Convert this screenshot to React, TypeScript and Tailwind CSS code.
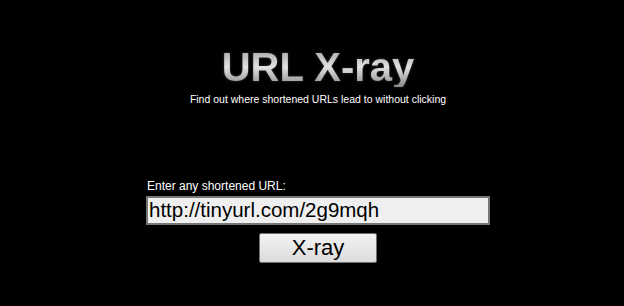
import { useState } from 'react';

export default function App() {
  const [url, setUrl] = useState('http://tinyurl.com/2g9mqh');

  return (
    <div className="w-[624px] h-[306px] bg-black overflow-hidden font-['Liberation_Sans',Arial,sans-serif]">
      <div className="flex flex-col items-center pl-[12px]">
        {/* Title */}
        <h1 className="mt-[47px] text-[40px] leading-none font-bold bg-linear-to-b from-[#a0a0a0] via-[#e2e2e2] to-[#8a8a8a] bg-clip-text text-transparent [filter:drop-shadow(0_0_1.5px_rgba(255,255,255,0.2))]">
          URL X-ray
        </h1>
        <p className="mt-[7px] text-[10.5px] leading-none text-white">
          Find out where shortened URLs lead to without clicking
        </p>

        {/* Form */}
        <div className="mt-[75px] w-[344px] flex flex-col">
          <label htmlFor="url" className="text-[12px] leading-none text-white pl-px">
            Enter any shortened URL:
          </label>
          <input
            id="url"
            type="text"
            value={url}
            onChange={(e) => setUrl(e.target.value)}
            className="mt-[4px] h-[29px] w-[344px] bg-[#efefef] border-2 border-[#767676] px-px text-[20.5px] leading-none text-black outline-none"
          />
          <button className="mt-[8px] self-center h-[30px] w-[118px] rounded-[2px] border border-[#707070] bg-linear-to-b from-[#f2f2f2] to-[#dcdcdc] text-[22px] leading-none text-black">
            X-ray
          </button>
        </div>
      </div>
    </div>
  );
}
